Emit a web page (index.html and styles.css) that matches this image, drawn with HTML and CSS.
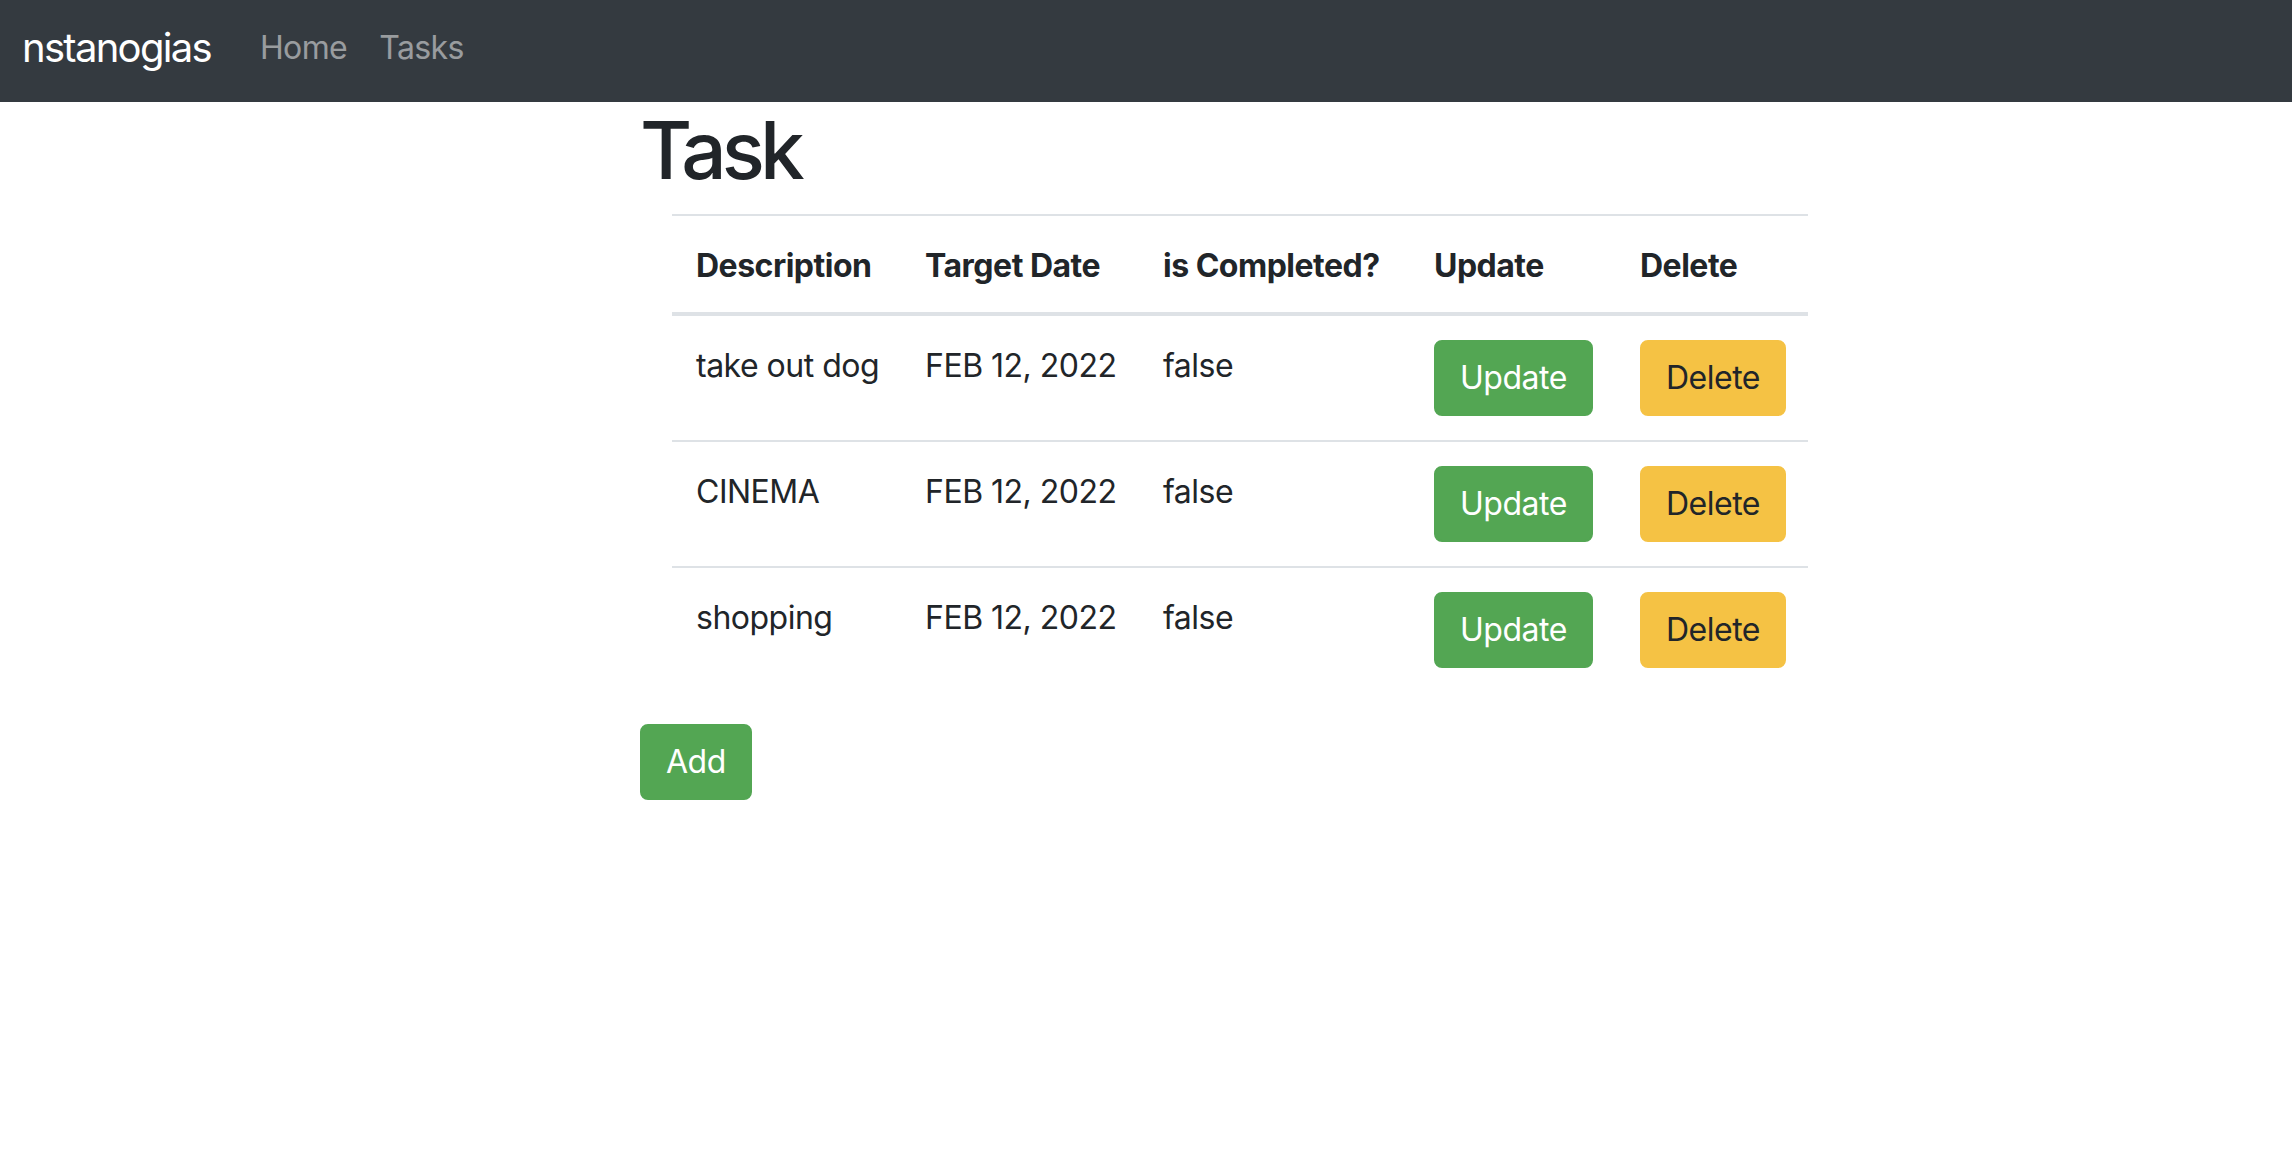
FILE: index.html
```html
<!DOCTYPE html>
<html lang="en">
<head>
<meta charset="utf-8">
<title>Tasks</title>
<link rel="stylesheet" href="styles.css">
</head>
<body>
<nav class="navbar">
  <a class="brand" href="#">nstanogias</a>
  <ul class="nav">
    <li><a class="nav-link" href="#">Home</a></li>
    <li><a class="nav-link" href="#">Tasks</a></li>
  </ul>
</nav>
<main class="page">
  <h1 class="title">Task</h1>
  <table class="table">
    <colgroup>
      <col class="c1"><col class="c2"><col class="c3"><col class="c4"><col class="c5">
    </colgroup>
    <thead>
      <tr>
        <th>Description</th>
        <th>Target Date</th>
        <th>is Completed?</th>
        <th>Update</th>
        <th>Delete</th>
      </tr>
    </thead>
    <tbody>
      <tr>
        <td>take out dog</td>
        <td>FEB 12, 2022</td>
        <td>false</td>
        <td><button class="btn btn-success">Update</button></td>
        <td><button class="btn btn-warning">Delete</button></td>
      </tr>
      <tr>
        <td>CINEMA</td>
        <td>FEB 12, 2022</td>
        <td>false</td>
        <td><button class="btn btn-success">Update</button></td>
        <td><button class="btn btn-warning">Delete</button></td>
      </tr>
      <tr>
        <td>shopping</td>
        <td>FEB 12, 2022</td>
        <td>false</td>
        <td><button class="btn btn-success">Update</button></td>
        <td><button class="btn btn-warning">Delete</button></td>
      </tr>
    </tbody>
  </table>
  <div class="actions">
    <button class="btn btn-success">Add</button>
  </div>
</main>
</body>
</html>
```

FILE: styles.css
```css
* { box-sizing: border-box; }

body {
  margin: 0;
  font-family: Inter, Roboto, "Liberation Sans", sans-serif;
  font-size: 32px;
  line-height: 48px;
  color: #212529;
  background: #ffffff;
}

.navbar {
  height: 102px;
  background: #343a40;
  display: flex;
  align-items: center;
  padding: 0 20px 6px 22px;
}

.brand {
  font-size: 40px;
  line-height: 60px;
  color: #ffffff;
  text-decoration: none;
  margin-right: 33px;
  letter-spacing: -1.7px;
}

.nav {
  display: flex;
  list-style: none;
  margin: 0;
  padding: 0;
}

.nav-link {
  display: block;
  padding: 0 16px;
  color: rgba(255, 255, 255, 0.5);
  text-decoration: none;
  letter-spacing: -0.6px;
}

.page {
  margin-left: 640px;
  width: 1168px;
}

.title {
  margin: 0 0 16px;
  font-size: 80px;
  line-height: 96px;
  font-weight: 500;
  letter-spacing: -5px;
}

.table {
  margin-left: 32px;
  width: 1136px;
  border-collapse: collapse;
  table-layout: fixed;
  margin-bottom: 32px;
}

.c1 { width: 229px; }
.c2 { width: 238px; }
.c3 { width: 271px; }
.c4 { width: 206px; }
.c5 { width: 192px; }

.table th,
.table td {
  padding: 26px 24px 22px;
  text-align: left;
  vertical-align: top;
  border-top: 2px solid #dee2e6;
  white-space: nowrap;
  letter-spacing: -0.5px;
}

.table th {
  font-weight: 700;
  border-bottom: 4px solid #dee2e6;
}

.table td .btn {
  margin: -2px 0 2px;
}

.btn {
  font-family: inherit;
  font-size: 32px;
  line-height: 48px;
  padding: 12px 24px;
  border: 2px solid transparent;
  border-radius: 8px;
  letter-spacing: -0.5px;
  cursor: pointer;
}

.btn-success {
  background: #53a653;
  border-color: #53a653;
  color: #ffffff;
}

.btn-warning {
  background: #f5c244;
  border-color: #f5c244;
  color: #212529;
}
```
